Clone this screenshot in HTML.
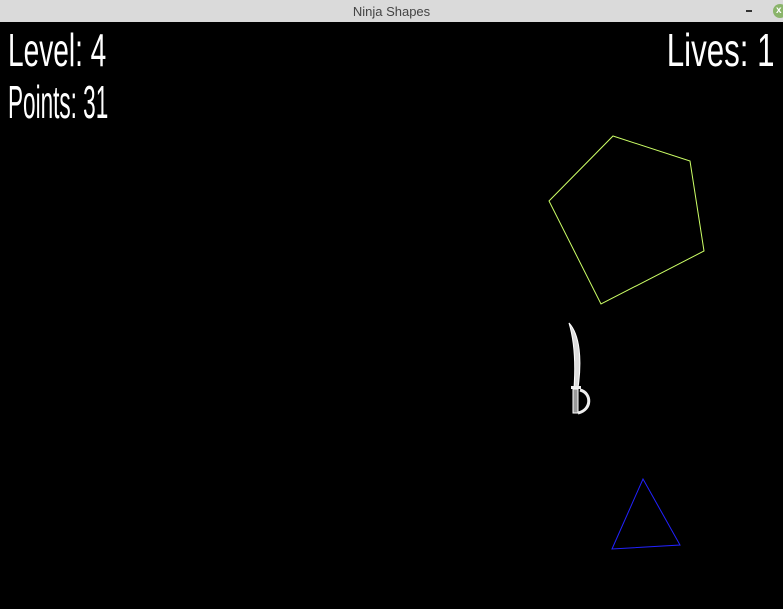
<!DOCTYPE html>
<html><head><style>
html,body{margin:0;padding:0;width:783px;height:609px;overflow:hidden;background:#000}
.tb{position:absolute;left:0;top:0;width:783px;height:22px;background:#dadada;}
.tt{position:absolute;left:0;width:783px;top:4px;text-align:center;font:13px "Liberation Sans",sans-serif;color:#444}
.t{position:absolute;color:#fff;font:46px "Liberation Sans",sans-serif;white-space:nowrap;line-height:1}
</style></head><body>
<div class="tb"><div class="tt">Ninja Shapes</div>
<div style="position:absolute;left:746px;top:10px;width:6px;height:2px;background:#333"></div>
<div style="position:absolute;left:773px;top:4px;width:14px;height:14px;border-radius:50%;background:#8ab46a;color:#fff;font:bold 10px 'Liberation Sans',sans-serif;line-height:14px;text-indent:3px">x</div>
</div>
<div class="t" style="left:8px;top:27px;transform-origin:0 0;transform:scaleX(0.61)">Level: 4</div>
<div class="t" style="left:8px;top:79px;transform-origin:0 0;transform:scaleX(0.49)">Points: 31</div>
<div class="t" style="right:8px;top:27px;transform-origin:100% 0;transform:scaleX(0.68)">Lives: 1</div>
<svg width="783" height="609" style="position:absolute;left:0;top:0">
<polygon points="613,136 690,161 704,251 601,304 549,201" fill="none" stroke="#ccff66" stroke-width="1"/>
<polygon points="643,479 680,545 612,549" fill="none" stroke="#2222ff" stroke-width="1"/>
<path d="M569,323 C580,335 582,360 578,388 L574,388 C576,360 574,340 569,323 Z" fill="#ddd" stroke="#fff" stroke-width="1"/>
<rect x="571" y="386" width="10" height="3" fill="#eee"/>
<rect x="573" y="389" width="5" height="24" fill="#999" stroke="#fff"/>
<path d="M580,390 C592,393 592,410 578,413" fill="none" stroke="#eee" stroke-width="3"/>
</svg>
</body></html>
